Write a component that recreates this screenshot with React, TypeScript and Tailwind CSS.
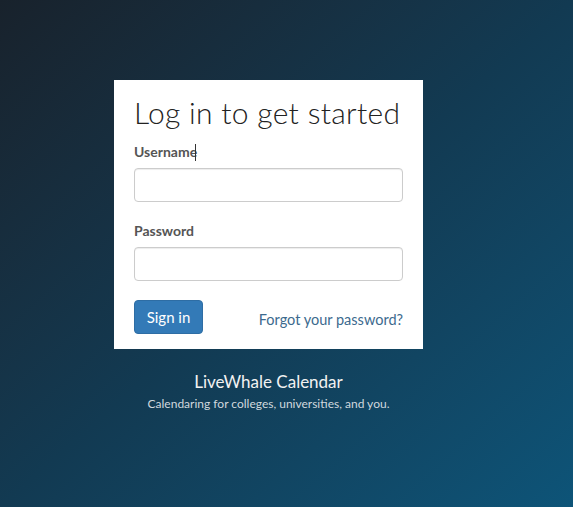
import React from "react";

export default function App() {
  return (
    <div
      className="min-h-[507px] w-full bg-gradient-to-br from-[#18222c] via-[#123a52] to-[#0d5478] flex flex-col items-center pt-20 pr-[36px]"
      style={{ fontFamily: "Lato, 'Open Sans', sans-serif" }}
    >
      <div className="w-[309px] bg-white px-5 pt-[12px] pb-[15px]">
        <h1 className="text-[30px] leading-[40px] font-light text-[#222] tracking-[0.3px]">
          Log in to get started
        </h1>
        <form className="mt-[10px]" onSubmit={(e) => e.preventDefault()}>
          <label className="flex items-center text-[14px] font-bold text-[#555] leading-5">
            Username<span className="w-px h-[17px] bg-[#333] -ml-[2px]" />
          </label>
          <input
            type="text"
            className="mt-[6px] block w-full h-[34px] rounded-[4px] border border-[#ccc] px-3 outline-none shadow-[inset_0_1px_1px_rgba(0,0,0,0.075)]"
          />
          <label className="block mt-[19px] text-[14px] font-bold text-[#555] leading-5">
            Password
          </label>
          <input
            type="password"
            className="mt-[6px] block w-full h-[34px] rounded-[4px] border border-[#ccc] px-3 outline-none shadow-[inset_0_1px_1px_rgba(0,0,0,0.075)]"
          />
          <div className="mt-[19px] flex items-end justify-between">
            <button
              type="submit"
              className="h-[34px] w-[69px] rounded-[4px] bg-[#337ab7] border border-[#2e6da4] text-white text-[15px]"
            >
              Sign in
            </button>
            <a href="#" className="text-[14.5px] text-[#3c6a8e] leading-5 mb-[4px]">
              Forgot your password?
            </a>
          </div>
        </form>
      </div>
      <div className="mt-[21px] text-center">
        <div className="text-[17px] text-[#f2f2f2] leading-6">LiveWhale Calendar</div>
        <div className="text-[12px] text-[#d0d8de] leading-5">
          Calendaring for colleges, universities, and you.
        </div>
      </div>
    </div>
  );
}
